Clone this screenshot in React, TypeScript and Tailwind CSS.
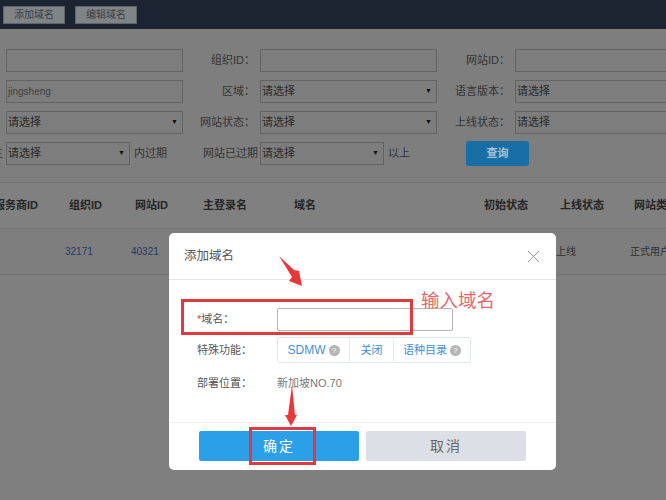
const F = '[font-family:"Liberation_Sans","Noto_Sans_CJK_SC",sans-serif]';

function Arrow({ className, points, box }: { className: string; points: string; box: string }) {
  return (
    <svg className={className} viewBox={box} fill="#e8383a">
      <polygon points={points} />
    </svg>
  );
}

function Input({ value, select, w = "w-[177px]" }: { value?: string; select?: boolean; w?: string }) {
  return (
    <div className={`${w} h-[23px] shrink-0 border border-[#636363] bg-[#7d7d7d] flex items-center justify-between pl-[1px] pr-[4px] text-[11px] text-[#2a2a2a]`}>
      <span className={value === "jingsheng" ? "text-[10px] text-[#3d3d3d]" : ""}>{value}</span>
      {select && <span className="text-[7px] text-[#111]">▼</span>}
    </div>
  );
}

function Label({ children, w }: { children: string; w: string }) {
  return <div className={`${w} shrink-0 text-right text-[11px] text-[#333] whitespace-nowrap pr-[5px]`}>{children}</div>;
}

function Row({ a, b, c, l1, l2 }: { a?: string; b?: string; c?: string; l1: string; l2: string }) {
  return (
    <div className="flex items-center h-[23px]">
      <Input value={a} select={a === "请选择"} />
      <Label w="w-[77px]">{l1}</Label>
      <Input value={b} select={b === "请选择"} />
      <Label w="w-[78px]">{l2}</Label>
      <Input value={c} w="w-[160px]" />
    </div>
  );
}

export default function App() {
  return (
    <div className={`relative w-[666px] h-[500px] overflow-hidden bg-[#7f7f7f] ${F}`}>
      <div className="h-[29px] bg-[#1b2430] flex items-center gap-[10px] pl-[3px]">
        {["添加域名", "编辑域名"].map((t) => (
          <div key={t} className="w-[62px] h-[18px] bg-[#7f8486] border border-[#5e6468] flex items-center justify-center text-[10px] text-[#3c3f42]">
            {t}
          </div>
        ))}
      </div>

      <div className="h-[154px] bg-[#7e7e7e] pt-[20px] pl-[6px] border-b border-[#747474] overflow-hidden">
        <div className="flex flex-col gap-[8px] w-[800px]">
          <Row l1="组织ID：" l2="网站ID：" />
          <Row a="jingsheng" b="请选择" c="请选择" l1="区域：" l2="语言版本：" />
          <Row a="请选择" b="请选择" c="请选择" l1="网站状态：" l2="上线状态：" />
          <div className="flex items-center h-[23px]">
            <span className="w-0 -ml-[14px] mr-[14px] text-[11px] text-[#333]">主</span>
            <Input value="请选择" select w="w-[124px]" />
            <span className="w-[73px] shrink-0 pl-[4px] text-[11px] text-[#333]">内过期</span>
            <span className="w-[57px] shrink-0 text-[11px] text-[#333] whitespace-nowrap">网站已过期</span>
            <Input value="请选择" select w="w-[124px]" />
            <span className="w-[82px] shrink-0 pl-[4px] text-[11px] text-[#333]">以上</span>
            <div className="w-[63px] h-[25px] rounded-[3px] bg-[#1a6ea6] flex items-center justify-center text-[11px] font-bold text-[#a9c4d6]">查询</div>
          </div>
        </div>
      </div>

      <div className="h-[46px] bg-[#808080] flex items-center text-[11px] font-bold text-[#252525] whitespace-nowrap border-b border-[#777]">
        <span className="w-[75px] shrink-0 -ml-[6px]">服务商ID</span>
        <span className="w-[66px] shrink-0">组织ID</span>
        <span className="w-[68px] shrink-0">网站ID</span>
        <span className="w-[91px] shrink-0">主登录名</span>
        <span className="w-[190px] shrink-0">域名</span>
        <span className="w-[76px] shrink-0">初始状态</span>
        <span className="w-[74px] shrink-0">上线状态</span>
        <span className="shrink-0">网站类型</span>
      </div>

      <div className="h-[46px] bg-[#7e7e7e] flex items-center text-[10px] text-[#2f2f2f] whitespace-nowrap border-b border-[#6f6f6f]">
        <span className="w-[65px] shrink-0" />
        <span className="w-[66px] shrink-0 text-[#253a63]">32171</span>
        <span className="w-[425px] shrink-0 text-[#253a63]">40321</span>
        <span className="w-[74px] shrink-0">上线</span>
        <span className="shrink-0">正式用户</span>
      </div>

      <div className="absolute left-[169px] top-[233px] w-[387px] h-[237px] bg-white rounded-[5px] flex flex-col text-[11px] text-[#555]">
        <div className="h-[47px] shrink-0 border-b border-[#e6e6e6] flex items-center justify-between pl-[15px] pr-[16px]">
          <span className="text-[12.5px] text-[#555]">添加域名</span>
          <svg width="13" height="13" viewBox="0 0 13 13" stroke="#9a9a9a" strokeWidth="1" fill="none">
            <path d="M1 1 L12 12 M12 1 L1 12" />
          </svg>
        </div>

        <div className="flex-1 flex flex-col pl-[28px] pt-[28px]">
          <div className="flex items-center h-[23px]">
            <span className="w-[80px] shrink-0"><span className="text-[#e8383a]">*</span>域名：</span>
            <div className="w-[176px] h-[23px] border border-[#b5b5b5] rounded-[2px]" />
          </div>
          <div className="flex items-center h-[26px] mt-[6px]">
            <span className="w-[80px] shrink-0">特殊功能：</span>
            <div className="h-[26px] flex border border-[#e3e8ee] rounded-[2px] text-[#3f90d8] text-[11px]">
              <div className="w-[72px] flex items-center justify-center gap-[3px] border-r border-[#e3e8ee] text-[12px]">
                SDMW
                <span className="w-[11px] h-[11px] rounded-full bg-[#b5b5b5] text-white text-[8px] leading-[11px] text-center">?</span>
              </div>
              <div className="w-[44px] flex items-center justify-center border-r border-[#e3e8ee]">关闭</div>
              <div className="w-[76px] flex items-center justify-center gap-[3px]">
                语种目录
                <span className="w-[11px] h-[11px] rounded-full bg-[#b5b5b5] text-white text-[8px] leading-[11px] text-center">?</span>
              </div>
            </div>
          </div>
          <div className="flex items-center h-[20px] mt-[10px]">
            <span className="w-[80px] shrink-0">部署位置：</span>
            <span className="text-[#777]">新加坡NO.70</span>
          </div>
        </div>

        <div className="h-[48px] shrink-0 border-t border-[#eeeeee] flex gap-[7px] pl-[30px] pt-[8px]">
          <div className="w-[160px] h-[30px] rounded-[2px] bg-[#2ba0e9] text-white flex items-center justify-center text-[14px] tracking-[2px]">确定</div>
          <div className="w-[160px] h-[30px] rounded-[2px] bg-[#dcdfe6] text-[#666] flex items-center justify-center text-[14px] tracking-[2px]">取消</div>
        </div>
      </div>

      <div className="absolute left-[181px] top-[299px] w-[232px] h-[36px] border-[3px] border-[#e03a3e]" />
      <div className="absolute left-[421px] top-[288px] text-[18.5px] leading-[26px] text-[#e4686a] whitespace-nowrap">输入域名</div>
      <div className="absolute left-[249px] top-[427px] w-[67px] h-[38px] border-[3px] border-[#e03a3e]" />
      <Arrow className="absolute left-[274px] top-[252px] w-[36px] h-[36px]" box="0 0 36 36" points="5,4 20,18 25,19 28,34 15,29 18,25" />
      <Arrow className="absolute left-[280px] top-[384px] w-[22px] h-[44px]" box="0 0 22 44" points="12,1 15,31 17,31 11,42 5,31 8,31" />
    </div>
  );
}
